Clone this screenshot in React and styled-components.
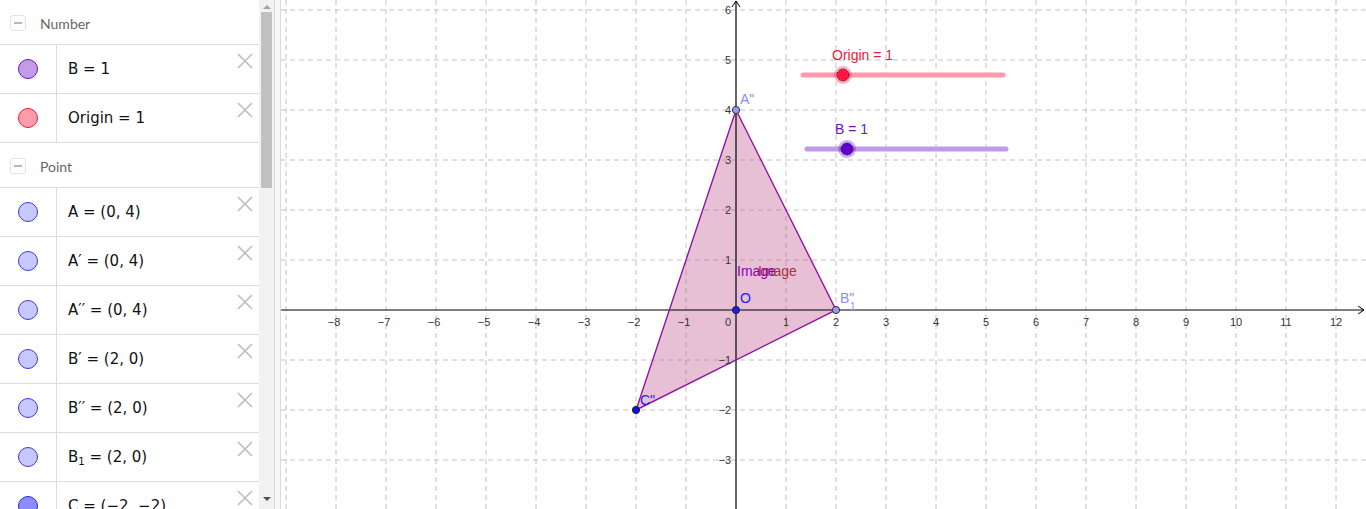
import React from "react";
import styled, { createGlobalStyle } from "styled-components";

const GlobalStyle = createGlobalStyle`
  html, body { margin: 0; padding: 0; background: #fff; overflow: hidden; }
  #root { width: 1366px; height: 509px; }
`;

// graph constants: origin of the coordinate system inside the svg, 50px per unit
const OX = 455;
const OY = 310;
const U = 50;
const px = (x) => OX + x * U;
const py = (y) => OY - y * U;

const Page = styled.div`
  display: flex;
  width: 1366px;
  height: 509px;
  overflow: hidden;
`;

const AlgebraPanel = styled.div`
  width: 259px;
  flex-shrink: 0;
  display: flex;
  flex-direction: column;
  overflow: hidden;
  background: #fff;
`;

const GroupHeader = styled.div`
  height: 42px;
  flex-shrink: 0;
  padding: 2px 0 0 10px;
  display: flex;
  align-items: center;
  border-bottom: 1px solid #dcdcdc;
  gap: 14px;
  font-family: Lato, "Liberation Sans", sans-serif;
  font-size: 14px;
  color: #666;
`;

const Collapse = styled.span`
  width: 14px;
  height: 14px;
  border: 1px solid #e3e3e3;
  border-radius: 3px;
  display: flex;
  align-items: center;
  justify-content: center;
  &::after {
    content: "";
    width: 8px;
    height: 1.5px;
    background: #b8b8b8;
  }
`;

const Row = styled.div`
  height: 48px;
  flex-shrink: 0;
  display: flex;
  border-bottom: 1px solid #dcdcdc;
`;

const MarbleCell = styled.div`
  width: 56px;
  flex-shrink: 0;
  display: flex;
  align-items: center;
  justify-content: center;
  border-right: 1px solid #dcdcdc;
`;

const Marble = styled.span`
  width: 18px;
  height: 18px;
  border-radius: 50%;
  background: ${(p) => p.$fill};
  border: 1px solid ${(p) => p.$stroke};
`;

const Value = styled.div`
  flex: 1;
  display: flex;
  align-items: center;
  padding-left: 11px;
  font-family: "DejaVu Sans", "Liberation Sans", sans-serif;
  font-size: 15px;
  color: #111;
  white-space: pre;
  sub {
    font-size: 10px;
    vertical-align: -3px;
  }
`;

const Close = styled.button`
  align-self: flex-start;
  margin: 7px 5px 0 0;
  padding: 0;
  width: 18px;
  height: 18px;
  border: none;
  background: none;
  display: flex;
`;

const Scrollbar = styled.div`
  width: 15px;
  flex-shrink: 0;
  background: #f1f1f1;
  display: flex;
  flex-direction: column;
  align-items: center;
`;

const Arrow = styled.span`
  width: 0;
  height: 0;
  margin: ${(p) => (p.$down ? "auto 0 8px" : "5px 0 3px")};
  border-left: 4px solid transparent;
  border-right: 4px solid transparent;
  ${(p) =>
    p.$down
      ? "border-top: 4px solid #505050;"
      : "border-bottom: 4px solid #a3a3a3;"}
`;

const Thumb = styled.span`
  width: 11px;
  height: 176px;
  background: #c1c1c1;
`;

const Splitter = styled.div`
  width: 5px;
  flex-shrink: 0;
  background: #f6f6f6;
  border-left: 1px solid #dadada;
  border-right: 1px solid #dadada;
`;

const GraphView = styled.div`
  flex: 1;
  background: #fff;
  svg {
    display: block;
  }
`;

const CloseIcon = () => (
  <svg width="18" height="18" viewBox="0 0 18 18">
    <path d="M2 2 L16 16 M16 2 L2 16" stroke="#bdbdbd" strokeWidth="1.6" />
  </svg>
);

const numbers = [
  { id: "b", text: "B = 1", fill: "#c39ce9", stroke: "#6a16c8" },
  { id: "o", text: "Origin = 1", fill: "#ff9cab", stroke: "#e8183c" },
];

const points = [
  { id: "a", text: "A = (0, 4)" },
  { id: "a1", text: "A′ = (0, 4)" },
  { id: "a2", text: "A′′ = (0, 4)" },
  { id: "b1", text: "B′ = (2, 0)" },
  { id: "b2", text: "B′′ = (2, 0)" },
  { id: "bs", text: "B", sub: "1", rest: " = (2, 0)" },
  { id: "c", text: "C = (−2, −2)", fill: "#8c8cff", stroke: "#2a2ad8" },
];

function ItemRow({ item }) {
  return (
    <Row>
      <MarbleCell>
        <Marble $fill={item.fill || "#c8c8ff"} $stroke={item.stroke || "#3b3bd6"} />
      </MarbleCell>
      <Value>
        <span>
          {item.text}
          {item.sub && <sub>{item.sub}</sub>}
          {item.rest}
        </span>
      </Value>
      <Close>
        <CloseIcon />
      </Close>
    </Row>
  );
}

function Graph() {
  const vx = [];
  for (let k = -9; k <= 12; k++) if (k !== 0) vx.push(k);
  const hy = [];
  for (let k = -3; k <= 6; k++) if (k !== 0) hy.push(k);
  const dash = "5 4";
  const tri = `${px(0)},${py(4)} ${px(2)},${py(0)} ${px(-2)},${py(-2)}`;
  return (
    <svg width="1085" height="509" viewBox="0 0 1085 509">
      {/* dashed grid */}
      {vx.map((k) => (
        <line key={"v" + k} x1={px(k)} y1="0" x2={px(k)} y2="509" stroke="#c2c2c2" strokeDasharray={dash} />
      ))}
      {hy.map((k) => (
        <line key={"h" + k} x1="0" y1={py(k)} x2="1085" y2={py(k)} stroke="#c2c2c2" strokeDasharray={dash} />
      ))}

      {/* triangle */}
      <polygon points={tri} fill="rgba(190,80,140,0.36)" stroke="none" />

      {/* axes */}
      <line x1="0" y1={OY} x2="1083" y2={OY} stroke="#000" strokeWidth="1.2" />
      <path d={`M1077 ${OY - 4} L1083 ${OY} L1077 ${OY + 4}`} fill="none" stroke="#000" strokeWidth="1" />
      <line x1={OX} y1="1" x2={OX} y2="509" stroke="#000" strokeWidth="1.2" />
      <path d={`M${OX - 4} 7 L${OX} 1 L${OX + 4} 7`} fill="none" stroke="#000" strokeWidth="1" />

      <polygon points={tri} fill="none" stroke="#9412a6" strokeWidth="1.4" />

      {/* tick labels */}
      <g fontFamily="'Liberation Sans', Arial, sans-serif" fontSize="11" fill="#333">
        {vx
          .filter((k) => k > -9)
          .map((k) => (
            <text key={"tx" + k} x={px(k) - (k < 0 ? 2 : 0)} y={OY + 16} textAnchor="middle">
              {k < 0 ? "−" + -k : k}
            </text>
          ))}
        {hy.map((k) => (
          <text key={"ty" + k} x={OX - 5} y={py(k) + 4} textAnchor="end">
            {k < 0 ? "−" + -k : k}
          </text>
        ))}
        <text x={OX - 5} y={OY + 16} textAnchor="end">0</text>
      </g>

      {/* sliders */}
      <g fontFamily="'Liberation Sans', Arial, sans-serif" fontSize="14">
        <line x1="522" y1="75" x2="722" y2="75" stroke="#ff9aab" strokeWidth="5" strokeLinecap="round" />
        <circle cx="562" cy="75" r="9" fill="rgba(255,30,70,0.35)" />
        <circle cx="562" cy="75" r="6" fill="#ff1744" stroke="#222" strokeWidth="1" strokeDasharray="1.5 1" />
        <text x="551" y="60" fill="#e8193c">Origin = 1</text>

        <line x1="526" y1="149" x2="725" y2="149" stroke="#c19ae8" strokeWidth="5" strokeLinecap="round" />
        <circle cx="566" cy="149" r="9" fill="rgba(110,20,210,0.35)" />
        <circle cx="566" cy="149" r="6" fill="#6000cf" stroke="#222" strokeWidth="1" strokeDasharray="1.5 1" />
        <text x="554" y="134" fill="#6a10d0">B = 1</text>
      </g>

      {/* points */}
      <circle cx={px(0)} cy={py(4)} r="3.6" fill="#9a9aee" stroke="#333" strokeWidth="1" />
      <circle cx={px(2)} cy={py(0)} r="3.6" fill="#9a9aee" stroke="#333" strokeWidth="1" />
      <circle cx={px(-2)} cy={py(-2)} r="3.6" fill="#1010e8" stroke="#222" strokeWidth="1" />
      <circle cx={px(0)} cy={py(0)} r="3.6" fill="#1a1aff" stroke="#222" strokeWidth="1" />

      {/* labels */}
      <g fontFamily="'Liberation Sans', Arial, sans-serif" fontSize="14">
        <text x="459" y="104" fill="#8c8cff">A"</text>
        <text x="559" y="303" fill="#8c8cff">B"</text>
        <text x="569" y="310" fill="#8c8cff" fontSize="10">1</text>
        <text x="359" y="405" fill="#2020ff">C"</text>
        <text x="459" y="303" fill="#1a1aff">O</text>
        <text x="477" y="276" fill="#a8303e">Image</text>
        <text x="456" y="276" fill="#8a00b8">Image</text>
      </g>
    </svg>
  );
}

export default function App() {
  return (
    <>
      <GlobalStyle />
      <Page>
        <AlgebraPanel>
          <GroupHeader>
            <Collapse />
            Number
          </GroupHeader>
          {numbers.map((n) => (
            <ItemRow key={n.id} item={n} />
          ))}
          <GroupHeader>
            <Collapse />
            Point
          </GroupHeader>
          {points.map((p) => (
            <ItemRow key={p.id} item={p} />
          ))}
        </AlgebraPanel>
        <Scrollbar>
          <Arrow />
          <Thumb />
          <Arrow $down />
        </Scrollbar>
        <Splitter />
        <GraphView>
          <Graph />
        </GraphView>
      </Page>
    </>
  );
}
